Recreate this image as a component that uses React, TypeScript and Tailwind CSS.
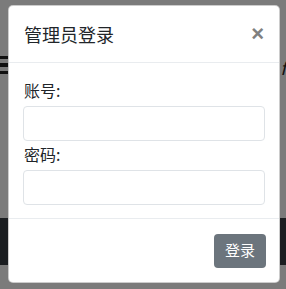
import React from 'react';

const font = { fontFamily: '"Noto Sans CJK SC", "Noto Sans", sans-serif' };

export default function App() {
  return (
    <div className="relative h-[289px] w-[286px] overflow-hidden bg-[#7b7b7b]" style={font}>
      {/* page behind the backdrop */}
      <div className="absolute left-0 top-[56px] flex h-[18px] w-[10px] flex-col justify-between">
        <div className="h-[3px] bg-[#111]" />
        <div className="h-[4px] bg-[#111]" />
        <div className="h-[3px] bg-[#111]" />
      </div>
      <div className="absolute right-0 top-[58px] text-[18px] italic leading-none text-[#111]">f</div>
      <div className="absolute left-0 top-[218px] h-[47px] w-full bg-[#1b1e21]" />

      {/* modal */}
      <div className="absolute left-[8px] top-[5px] flex h-[278px] w-[272px] flex-col rounded-[5px] border border-black/20 bg-white">
        <div className="flex h-[57px] items-center justify-between border-b border-[#e9ecef] pl-[15px] pr-[15px]">
          <h5 className="text-[18px] leading-none text-[#212529]">管理员登录</h5>
          <span
            className="text-[22px] font-bold leading-none text-[#808080]"
            style={{ fontFamily: '"Liberation Sans", Arial, sans-serif' }}
          >
            ×
          </span>
        </div>
        <div className="flex flex-col border-b border-[#e9ecef] px-[14px] pb-[13px] pt-[15px]">
          <label className="mb-[4px] pl-[1px] text-[16px] leading-[24px] text-[#212529]">账号:</label>
          <div className="h-[35px] rounded-[4px] border border-[#dfe3e7]" />
          <label className="mb-[4px] mt-[1px] pl-[1px] text-[16px] leading-[24px] text-[#212529]">密码:</label>
          <div className="h-[35px] rounded-[4px] border border-[#dfe3e7]" />
        </div>
        <div className="flex flex-1 items-center justify-end px-[13px]">
          <button className="h-[34px] w-[52px] rounded-[4px] bg-[#6c757d] text-[15px] text-white">登录</button>
        </div>
      </div>
    </div>
  );
}
